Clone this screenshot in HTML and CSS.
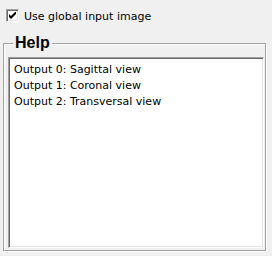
FILE: index.html
```html
<!DOCTYPE html>
<html lang="en">
<head>
  <meta charset="UTF-8" />
  <title>Viewer Settings</title>
  <link rel="stylesheet" href="styles.css">
</head>
<body>
  <label class="check-row">
    <span class="check-box">
      <svg width="7" height="7" viewBox="0 0 7 7"><path d="M0 2v3l2 2l5-5v-3l-5 5z" fill="#000"/></svg>
    </span>
    <span class="check-text">Use global input image</span>
  </label>

  <div class="group">
    <span class="group-title">Help</span>
    <div class="help-box">
      <div>Output 0: Sagittal view</div>
      <div>Output 1: Coronal view</div>
      <div>Output 2: Transversal view</div>
    </div>
  </div>
</body>
</html>
```

FILE: styles.css
```css
body {
  margin: 0;
  width: 272px;
  height: 256px;
  background: #f0f0f0;
  color: #000;
  font-family: 'DejaVu Sans', Verdana, sans-serif;
  font-size: 11px;
  overflow: hidden;
}

.check-row {
  display: flex;
  align-items: center;
  gap: 5px;
  padding: 9px 0 0 6px;
  height: 13px;
}

.check-box {
  width: 13px;
  height: 13px;
  box-sizing: border-box;
  background: #fff;
  border: 1px solid;
  border-color: #a0a0a0 #fff #fff #a0a0a0;
  box-shadow: inset 1px 1px #696969, inset -1px -1px #e3e3e3;
  display: flex;
  align-items: center;
  justify-content: center;
}

.check-text {
  line-height: 13px;
  padding-top: 1px;
}

.group {
  position: relative;
  margin: 21px 0 0 3px;
  width: 263px;
  height: 208px;
  box-sizing: border-box;
  border: 1px solid #a0a0a0;
  box-shadow: inset 1px 1px #fff, 1px 1px #fff;
  padding: 13px 1px 0 4px;
}

.group-title {
  position: absolute;
  top: -10px;
  left: 9px;
  padding: 0 2px;
  background: #f0f0f0;
  font-family: 'Liberation Sans', Arial, sans-serif;
  font-weight: bold;
  font-size: 16px;
  line-height: 18px;
}

.help-box {
  width: 256px;
  height: 191px;
  box-sizing: border-box;
  background: #fff;
  border: 1px solid;
  border-color: #a0a0a0 #fff #fff #a0a0a0;
  box-shadow: inset 1px 1px #696969, inset -1px -1px #e3e3e3;
  padding: 4px 5px;
  line-height: 16px;
}
```
